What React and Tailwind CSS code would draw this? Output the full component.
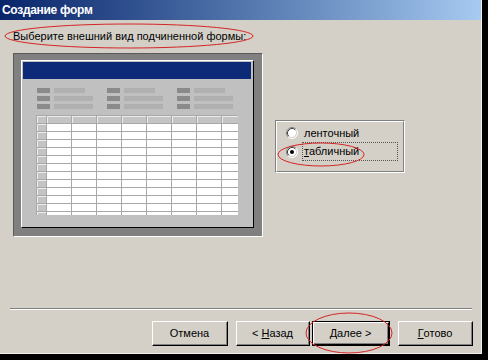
import React from "react";

function Radio({ checked }) {
  return (
    <svg width="12" height="12" viewBox="0 0 12 12" className="shrink-0">
      <circle cx="6" cy="6" r="5" fill="#ffffff" />
      <path d="M2.11 9.89 A5.5 5.5 0 0 1 9.89 2.11" fill="none" stroke="#808080" strokeWidth="1" />
      <path d="M9.89 2.11 A5.5 5.5 0 0 1 2.11 9.89" fill="none" stroke="#ffffff" strokeWidth="1" />
      <path d="M2.82 9.18 A4.5 4.5 0 0 1 9.18 2.82" fill="none" stroke="#404040" strokeWidth="1" />
      <path d="M9.18 2.82 A4.5 4.5 0 0 1 2.82 9.18" fill="none" stroke="#d4d0c8" strokeWidth="1" />
      {checked && <circle cx="6" cy="6" r="2" fill="#000000" />}
    </svg>
  );
}

function Button({ children, def, className }) {
  return (
    <div
      className={
        "h-[25px] " +
        (def ? "border border-black " : "") +
        className
      }
    >
      <div className="h-full w-full border-t border-l border-t-white border-l-white border-b border-r border-b-black border-r-black">
        <div className="h-full w-full border-b border-r border-b-[#808080] border-r-[#808080] flex items-center justify-center text-[11px] text-black whitespace-pre">
          {children}
        </div>
      </div>
    </div>
  );
}

export default function App() {
  const colTemplate = Array.from({ length: 9 });
  const rowTemplate = Array.from({ length: 13 });
  return (
    <div className="w-[488px] h-[360px] bg-black" style={{ fontFamily: '"Liberation Sans", Arial, sans-serif' }}>
      <div className="relative w-[482px] h-[354px] bg-[#d4d0c8] flex flex-col border-r border-b border-r-[#f0efea] border-b-[#f0efea]">
        {/* title bar */}
        <div className="h-[20px] shrink-0 flex items-center px-[2px] bg-gradient-to-r from-[#0a246a] to-[#a6caf0]">
          <span className="text-white font-bold text-[12px] tracking-[-0.3px] leading-none">Создание форм</span>
        </div>

        {/* prompt */}
        <div className="mt-[9px] ml-[13px] h-[14px] text-[11px] leading-[14px] text-black">
          Выберите внешний вид подчиненной формы:
        </div>

        {/* main row */}
        <div className="mt-[10px] ml-[13px] flex items-start">
          {/* preview */}
          <div className="w-[250px] h-[184px] bg-[#808080] border border-t-[#5a5a5a] border-l-[#5a5a5a] border-b-white border-r-white pt-[6px] pl-[7px]">
            <div className="w-[233px] h-[168px] bg-[#c0c0c0] border border-t-white border-l-white border-b-black border-r-black">
              <div className="ml-[1px] mt-[1px] w-[228px] h-[17px] bg-[#0c2a78]" />
              {/* label rows */}
              <div className="mt-[9px] ml-[15px] flex gap-[13px]">
                {[0, 1, 2].map((c) => (
                  <div key={c} className="flex flex-col gap-[3px] w-[57px]">
                    {[31, 39, 39].map((w, r) => (
                      <div key={r} className="flex items-center gap-[4px] h-[5px]">
                        <div className="w-[13px] h-[5px] bg-[#8a8a8a]" />
                        <div className="h-[5px] bg-[#b0b0b0]" style={{ width: w }} />
                      </div>
                    ))}
                  </div>
                ))}
              </div>
              {/* datasheet */}
              <div className="mt-[6px] ml-[14px] w-[202px] grid grid-cols-[9px_repeat(7,24px)_16px] grid-rows-[7px_repeat(11,7px)_3px] gap-px bg-[#a8a8a8] border-l border-t border-l-[#a8a8a8] border-t-[#a8a8a8]">
                {rowTemplate.map((_, r) =>
                  colTemplate.map((_, c) => {
                    const gray = r === 0 || c === 0;
                    return (
                      <div
                        key={r + "-" + c}
                        className={
                          gray
                            ? "bg-[#c4c4c4] border-t border-l border-t-[#ececec] border-l-[#ececec]"
                            : "bg-white"
                        }
                      />
                    );
                  })
                )}
              </div>
            </div>
          </div>

          {/* radio group */}
          <div className="ml-[12px] mt-[67px] w-[130px] h-[53px] border border-t-[#808080] border-l-[#808080] border-b-white border-r-white">
            <div className="h-full w-full border border-t-white border-l-white border-b-[#808080] border-r-[#808080] pl-[9px] pt-[4px]">
              <div className="flex items-center h-[14px] gap-[6px]">
                <Radio />
                <span className="text-[11px] leading-none text-black">ленточный</span>
              </div>
              <div className="mt-[2px] flex items-center h-[19px] gap-[4px]">
                <Radio checked />
                <div className="h-[19px] w-[96px] border border-dotted border-[#555] flex items-center pl-[1px]">
                  <span className="text-[11px] leading-none text-black">
                    <span className="underline">т</span>абличный
                  </span>
                </div>
              </div>
            </div>
          </div>
        </div>

        {/* separator */}
        <div className="mt-[71px] ml-[10px] w-[462px] border-t border-b border-t-[#808080] border-b-white" />

        {/* buttons */}
        <div className="mt-[11px] ml-[152px] flex">
          <Button className="w-[76px]">Отмена</Button>
          <Button className="ml-[8px] w-[74px]">
            {"< "}<span className="underline">Н</span>азад
          </Button>
          <Button def className="ml-[2px] w-[78px]">
            <span className="underline">Д</span>{"алее >"}
          </Button>
          <Button className="ml-[8px] w-[75px]">
            <span className="underline">Г</span>отово
          </Button>
        </div>

        {/* red annotation ellipses */}
        <svg className="absolute inset-0 pointer-events-none" width="482" height="354">
          <ellipse cx="129" cy="36" rx="124" ry="12" fill="none" stroke="#d42424" strokeWidth="1" />
          <ellipse cx="321" cy="154.5" rx="43" ry="11.5" fill="none" stroke="#d42424" strokeWidth="1" />
          <ellipse cx="349" cy="333" rx="43" ry="20" fill="none" stroke="#d42424" strokeWidth="1" />
        </svg>
      </div>
    </div>
  );
}
